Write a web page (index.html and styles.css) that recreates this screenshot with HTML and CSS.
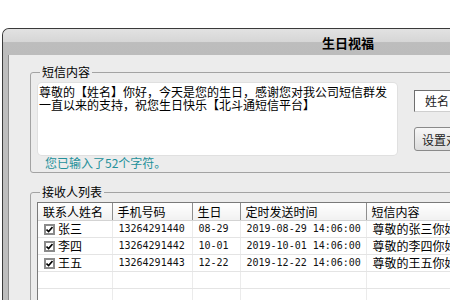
FILE: index.html
```html
<!DOCTYPE html>
<html lang="zh-CN">
<head>
    <meta charset="UTF-8">
    <title>生日视福</title>
    <link rel="stylesheet" href="styles.css">
</head>
<body>
    <div class="window">
        <div class="titlebar"><span class="title">生日视福</span></div>
        <div class="frame">
            <div class="client">
                <fieldset class="group msg-group">
                    <legend>短信内容</legend>
                    <div class="msg-row">
                        <div class="msg-main">
                            <div class="msg-text">尊敬的【姓名】你好，今天是您的生日，感谢您对我公司短信群发<br>一直以来的支持，祝您生日快乐【北斗通短信平台】</div>
                            <div class="counter">您已输入了52个字符。</div>
                        </div>
                        <div class="msg-side">
                            <div class="field-box">姓名</div>
                            <button class="btn">设置对象</button>
                        </div>
                    </div>
                </fieldset>

                <fieldset class="group list-group">
                    <legend>接收人列表</legend>
                    <div class="listview">
                        <table class="list">
                            <colgroup>
                                <col style="width:74px">
                                <col style="width:80px">
                                <col style="width:48px">
                                <col style="width:126px">
                                <col style="width:200px">
                            </colgroup>
                            <thead>
                                <tr>
                                    <th>联系人姓名</th>
                                    <th>手机号码</th>
                                    <th>生日</th>
                                    <th>定时发送时间</th>
                                    <th>短信内容</th>
                                </tr>
                            </thead>
                            <tbody>
                                <tr>
                                    <td><span class="item"><span class="chk"><svg viewBox="0 0 7 7" width="7" height="7"><path d="M0.5 3.5 L2.6 5.6 L6.5 1" fill="none" stroke="#000" stroke-width="1.6"/></svg></span>张三</span></td>
                                    <td class="num">13264291440</td>
                                    <td class="num">08-29</td>
                                    <td class="num">2019-08-29 14:06:00</td>
                                    <td>尊敬的张三你好，今天</td>
                                </tr>
                                <tr>
                                    <td><span class="item"><span class="chk"><svg viewBox="0 0 7 7" width="7" height="7"><path d="M0.5 3.5 L2.6 5.6 L6.5 1" fill="none" stroke="#000" stroke-width="1.6"/></svg></span>李四</span></td>
                                    <td class="num">13264291442</td>
                                    <td class="num">10-01</td>
                                    <td class="num">2019-10-01 14:06:00</td>
                                    <td>尊敬的李四你好，今天</td>
                                </tr>
                                <tr>
                                    <td><span class="item"><span class="chk"><svg viewBox="0 0 7 7" width="7" height="7"><path d="M0.5 3.5 L2.6 5.6 L6.5 1" fill="none" stroke="#000" stroke-width="1.6"/></svg></span>王五</span></td>
                                    <td class="num">13264291443</td>
                                    <td class="num">12-22</td>
                                    <td class="num">2019-12-22 14:06:00</td>
                                    <td>尊敬的王五你好，今天</td>
                                </tr>
                                <tr class="empty"><td></td><td></td><td></td><td></td><td></td></tr>
                                <tr class="empty"><td></td><td></td><td></td><td></td><td></td></tr>
                            </tbody>
                        </table>
                    </div>
                </fieldset>
            </div>
        </div>
    </div>
</body>
</html>
```

FILE: styles.css
```css
html, body {
    margin: 0;
    padding: 0;
    width: 450px;
    height: 300px;
    overflow: hidden;
}
body {
    background: #fff;
    font-family: "Noto Sans CJK SC", "Noto Sans", sans-serif;
    font-size: 12px;
    color: #000;
}
.window {
    margin: 28px 0 0 2px;
    width: 690px;
    height: 300px;
    border: 1px solid #3a3a3a;
    border-right: none;
    border-bottom: none;
    border-radius: 7px 0 0 0;
    overflow: hidden;
    background: #bdbdbd;
}
.titlebar {
    height: 26px;
    display: flex;
    align-items: center;
    justify-content: center;
    background: linear-gradient(#e2e2e2, #d6d6d6 50%, #bdbdbd 52%, #bcbcbc);
}
.title {
    font-weight: bold;
    font-size: 13px;
}
.frame {
    padding-left: 5px;
}
.client {
    background: #ececec;
    border-left: 1px solid #8c8c8c;
    padding: 10px 0 20px 21px;
    height: 260px;
}
.group {
    margin: 0;
    border: 1px solid #a3a3a3;
    border-radius: 3px;
    min-width: 0;
}
.group legend {
    padding: 0 2px;
    line-height: 14px;
    font-size: 12px;
}
.msg-group {
    padding: 4px 0 2px 7px;
}
.msg-group legend {
    margin-left: 2px;
}
.msg-row {
    display: flex;
    align-items: flex-start;
}
.msg-text {
    width: 358px;
    height: 70px;
    padding: 2px 0 0 1px;
    background: #fff;
    border-radius: 4px;
    box-shadow: 0 0 0 1px #e0e0e0;
    line-height: 13px;
    white-space: nowrap;
    overflow: hidden;
}
.counter {
    margin-top: 1px;
    padding-left: 7px;
    line-height: 14px;
    color: #23909a;
}
.msg-side {
    margin-left: 17px;
    padding-top: 7px;
    display: flex;
    flex-direction: column;
}
.field-box {
    width: 80px;
    height: 22px;
    box-sizing: border-box;
    border: 1px solid;
    border-color: #6f6f6f #cfcfcf #cfcfcf #6f6f6f;
    background: #fff;
    padding-left: 10px;
    line-height: 20px;
    color: #222;
}
.btn {
    margin-top: 15px;
    width: 80px;
    height: 24px;
    padding: 0 0 0 7px;
    text-align: left;
    font-family: inherit;
    font-size: 12px;
    border: 1px solid #8a8a8a;
    border-radius: 3px;
    background: linear-gradient(#f7f7f7, #dcdcdc);
    color: #222;
}
.list-group {
    margin-top: 12px;
    padding: 3px 0 0 6px;
    height: 120px;
}
.list-group legend {
    margin-left: 3px;
}
.listview {
    border: 1px solid #7a7a7a;
    background: #fff;
    height: 120px;
}
.list {
    border-collapse: collapse;
    table-layout: fixed;
    width: 528px;
}
.list th {
    height: 17px;
    padding: 0 5px;
    font-weight: normal;
    text-align: left;
    line-height: 17px;
    background: linear-gradient(#ffffff, #f1f1f1);
    border-right: 1px solid #8e8e8e;
    border-bottom: 1px solid #d3d3d3;
    white-space: nowrap;
    overflow: hidden;
}
.list td {
    height: 16px;
    padding: 0 0 0 6px;
    line-height: 16px;
    border-right: 1px solid #ebebeb;
    border-bottom: 1px solid #e4e4e4;
    white-space: nowrap;
    overflow: hidden;
}
.list td.num {
    font-family: "DejaVu Sans Mono", "Liberation Mono", monospace;
    font-size: 10px;
    color: #111;
}
.item {
    display: flex;
    align-items: center;
    gap: 3px;
}
.chk {
    width: 11px;
    height: 11px;
    box-sizing: border-box;
    border: 2px solid #8a8a8a;
    background: #fff;
    display: flex;
    align-items: center;
    justify-content: center;
}
.chk svg {
    display: block;
}
```
